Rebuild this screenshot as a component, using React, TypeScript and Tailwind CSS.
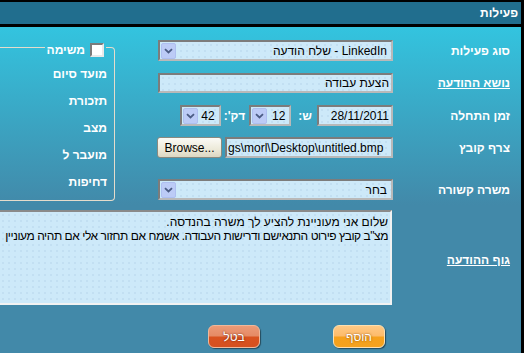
import React from "react";

const inputBg =
  "bg-[#cde9f9] bg-[image:radial-gradient(circle,#c2dff2_0.8px,transparent_1px)] bg-[length:6px_6px]";
const inset =
  "border-2 border-t-[#7c7c7c] border-l-[#7c7c7c] border-b-[#b9b9b9] border-r-[#b9b9b9]";

function Arrow() {
  return (
    <div className="ml-[1px] w-[15px] h-[16px] shrink-0 rounded-[2px] bg-[#bccbf6] border border-[#aebff0] flex items-center justify-center">
      <svg width="9" height="6" viewBox="0 0 9 6">
        <path d="M1 1.2l3.5 3.3L8 1.2" stroke="#4b5c84" strokeWidth="1.8" fill="none" />
      </svg>
    </div>
  );
}

function Select({ text, w }: { text: string; w: string }) {
  return (
    <div className={`${w} h-[21px] flex items-center ${inset} ${inputBg}`}>
      <Arrow />
      <div dir="rtl" className="flex-1 pr-[4px] text-[12px] text-black whitespace-nowrap">
        {text}
      </div>
    </div>
  );
}

function Label({ children, underline }: { children: React.ReactNode; underline?: boolean }) {
  return (
    <div
      dir="rtl"
      className={`flex-1 text-right pr-[11px] text-white font-bold text-[12px] whitespace-nowrap ${underline ? "underline" : ""}`}
    >
      {children}
    </div>
  );
}

export default function App() {
  return (
    <div className="w-[524px] h-[353px] bg-black overflow-hidden font-['Liberation_Sans',Arial,sans-serif]">
      <div className="w-[521px] h-[353px] flex flex-col">
        <div className="mt-[2px] h-[22px] shrink-0 box-content border-b-[3px] border-black bg-[#216e8e] flex items-center justify-end pr-[3px]">
          <span dir="rtl" className="text-white font-bold text-[12px]">
            פעילות
          </span>
        </div>
        <div className="flex-1 bg-[linear-gradient(to_bottom,#33c4df_0px,#4289a9_178px)]">
          <div className="h-[183px] flex items-start">
            <fieldset
              dir="rtl"
              className="mt-[16px] w-[115px] border border-l-0 border-[#e6dccb] rounded-r-[4px] pb-[4px]"
            >
              <legend className="mr-[8px] px-[2px] h-[8px]">
                <div className="flex items-center gap-[5px] h-[14px]">
                  <div className="w-[14px] h-[14px] bg-white border-2 border-t-[#7b7b7b] border-l-[#7b7b7b] border-b-[#e9e9e9] border-r-[#e9e9e9]" />
                  <span className="text-white font-bold text-[12px]">משימה</span>
                </div>
              </legend>
              <div className="pt-[10px] pr-[7px] flex flex-col text-white font-bold text-[12px]">
                {["מועד סיום", "תזכורת", "מצב", "מועבר ל", "דחיפות"].map((t) => (
                  <div key={t} className="h-[27px] leading-[27px]">
                    {t}
                  </div>
                ))}
              </div>
            </fieldset>

            <div className="ml-[43px] flex-1 pt-[13px] flex flex-col">
              <div className="flex items-center">
                <Select text="LinkedIn - שלח הודעה" w="w-[235px]" />
                <Label>סוג פעילות</Label>
              </div>

              <div className="mt-[12px] flex items-center">
                <div
                  dir="rtl"
                  className={`w-[235px] h-[20px] flex items-center pr-[2px] text-[12px] text-black ${inset} ${inputBg}`}
                >
                  הצעת עבודה
                </div>
                <Label underline>נושא ההודעה</Label>
              </div>

              <div className="mt-[12px] flex items-center">
                <div className="w-[235px] h-[21px] flex items-center justify-end">
                  <Select text="42" w="w-[41px]" />
                  <span dir="rtl" className="ml-[3px] mr-[4px] text-white font-bold text-[12px]">
                    דק':
                  </span>
                  <Select text="12" w="w-[42px]" />
                  <span dir="rtl" className="ml-[7px] mr-[5px] text-white font-bold text-[12px]">
                    ש:
                  </span>
                  <div
                    dir="rtl"
                    className={`w-[76px] h-[21px] flex items-center pr-[2px] text-[12px] text-black ${inset} ${inputBg}`}
                  >
                    28/11/2011
                  </div>
                </div>
                <Label>זמן התחלה</Label>
              </div>

              <div className="mt-[11px] flex items-center">
                <div className="w-[235px] h-[21px] flex items-center">
                  <button className="ml-[-1px] w-[65px] h-[21px] rounded-[3px] border border-[#8a8a80] bg-[linear-gradient(to_bottom,#fbfaf6,#ece9d8_60%,#dcd7c2)] text-[12px] text-black leading-none">
                    Browse...
                  </button>
                  <div
                    className={`ml-[3px] flex-1 h-[21px] flex items-center overflow-hidden pl-[1px] text-[12px] text-black whitespace-nowrap ${inset} ${inputBg}`}
                  >
                    gs\morl\Desktop\untitled.bmp
                  </div>
                </div>
                <Label>צרף קובץ</Label>
              </div>

              <div className="mt-[21px] flex items-center">
                <Select text="בחר" w="w-[235px]" />
                <Label>משרה קשורה</Label>
              </div>
            </div>
          </div>

          <div className="flex items-center">
            <div
              dir="rtl"
              className={`w-[392px] h-[95px] border-2 border-l-0 border-t-[#8a8a8a] border-b-[#f2f2f2] border-r-[#f2f2f2] pt-[3px] pr-[2px] overflow-hidden text-[12px] leading-[14px] text-black whitespace-nowrap ${inputBg}`}
            >
              <div>שלום אני מעוניינת להציע לך משרה בהנדסה.</div>
              <div className="tracking-[-0.45px]">
                מצ"ב קובץ פירוט התנאישם ודרישות העבודה. אשמח אם תחזור אלי אם תהיה מעוניין
              </div>
            </div>
            <div className="flex-1 pt-[5px]">
              <Label underline>גוף ההודעה</Label>
            </div>
          </div>

          <div className="mt-[20px] flex">
            <button
              dir="rtl"
              className="ml-[208px] w-[52px] h-[23px] rounded-[6px] border border-[#f0b89a] bg-[linear-gradient(to_bottom,#ec9a76_0%,#e58a65_48%,#d9521f_52%,#d4501f_100%)] shadow-[1px_1px_1px_rgba(0,0,0,0.45)] text-white text-[12px] [text-shadow:0_0_2px_rgba(80,20,0,0.9)]"
            >
              בטל
            </button>
            <button
              dir="rtl"
              className="ml-[73px] w-[52px] h-[23px] rounded-[6px] border border-[#fde0b0] bg-[linear-gradient(to_bottom,#ffc985_0%,#fdbb6a_48%,#f6a11c_52%,#f5a21e_100%)] shadow-[1px_1px_1px_rgba(0,0,0,0.45)] text-white text-[12px] [text-shadow:0_0_2px_rgba(120,60,0,0.9)]"
            >
              הוסף
            </button>
          </div>
        </div>
      </div>
    </div>
  );
}
